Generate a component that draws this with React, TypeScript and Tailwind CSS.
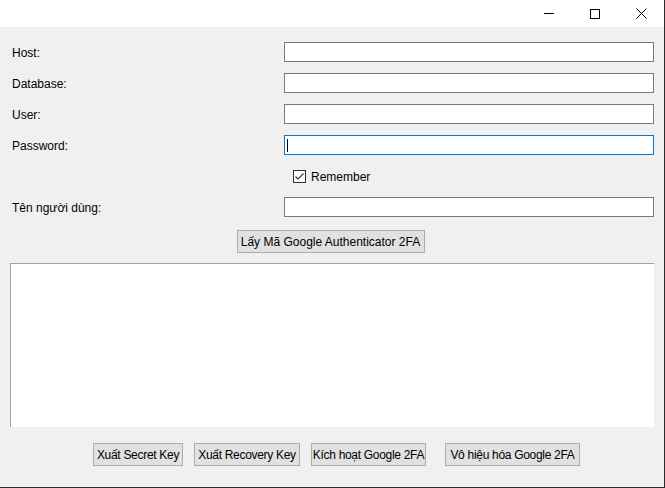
import { useState } from 'react';

const font = { fontFamily: '"Liberation Sans", Arial, sans-serif' };

function Field({ label, focused = false }: { label: string; focused?: boolean }) {
  return (
    <div className="flex items-center h-5">
      <label className="w-[272px] text-[12px] text-black pt-[2px]">{label}</label>
      <div
        className={`w-[370px] h-5 bg-white border ${focused ? 'border-[#0078d7]' : 'border-[#7a7a7a]'} flex items-center px-[2px]`}
      >
        {focused && <span className="w-px h-[13px] bg-black" />}
      </div>
    </div>
  );
}

function WinButton({ children, className = '' }: { children: string; className?: string }) {
  return (
    <button
      className={`h-[23px] bg-[#e1e1e1] border border-[#adadad] text-[12px] text-black px-0 leading-none whitespace-nowrap ${className}`}
    >
      {children}
    </button>
  );
}

export default function App() {
  const [remember, setRemember] = useState(true);

  return (
    <div
      className="w-[665px] h-[488px] bg-[#f0f0f0] border-r border-b border-[#2b2b2b] flex flex-col overflow-hidden"
      style={font}
    >
      {/* Title bar */}
      <div className="h-[27px] bg-white flex justify-end items-center shrink-0">
        <div className="w-[46px] h-full flex items-center justify-center">
          <div className="w-[10px] h-px bg-black" />
        </div>
        <div className="w-[46px] h-full flex items-center justify-center">
          <div className="w-[10px] h-[10px] border border-black" />
        </div>
        <div className="w-[46px] h-full flex items-center justify-center">
          <svg width="11" height="11" viewBox="0 0 11 11">
            <path d="M0.5 0.5 L10.5 10.5 M10.5 0.5 L0.5 10.5" stroke="#000" strokeWidth="1" />
          </svg>
        </div>
      </div>

      {/* Form */}
      <div className="pl-[12px] pt-[15px] flex flex-col gap-[11px]">
        <Field label="Host:" />
        <Field label="Database:" />
        <Field label="User:" />
        <Field label="Password:" focused />
      </div>

      <div className="pl-[293px] mt-[15px] flex items-center gap-[5px] h-[13px]">
        <button
          onClick={() => setRemember(!remember)}
          className="w-[13px] h-[13px] border border-[#333] bg-white flex items-center justify-center"
        >
          {remember && (
            <svg width="11" height="11" viewBox="0 0 11 11">
              <path d="M1.5 5.5 L4 8 L9.5 2.5" stroke="#333" strokeWidth="1.1" fill="none" />
            </svg>
          )}
        </button>
        <span className="text-[12px] text-black">Remember</span>
      </div>

      <div className="pl-[12px] mt-[14px]">
        <Field label="Tên người dùng:" />
      </div>

      <div className="flex justify-center mt-[13px]">
        <WinButton className="w-[188px] h-[22px] ml-[-3px]">Lấy Mã Google Authenticator 2FA</WinButton>
      </div>

      {/* Output */}
      <div className="ml-[10px] mt-[10px] w-[644px] h-[164px] bg-white border-l border-t border-[#a0a0a0]" />

      {/* Bottom buttons */}
      <div className="flex pl-[93px] mt-[16px] gap-[11px]">
        <WinButton className="w-[90px] tracking-[-0.3px]">Xuất Secret Key</WinButton>
        <WinButton className="w-[106px] tracking-[-0.3px]">Xuất Recovery Key</WinButton>
        <WinButton className="w-[115px] mr-[8px] tracking-[-0.3px]">Kích hoạt Google 2FA</WinButton>
        <WinButton className="w-[135px] tracking-[-0.3px]">Vô hiệu hóa Google 2FA</WinButton>
      </div>
    </div>
  );
}
